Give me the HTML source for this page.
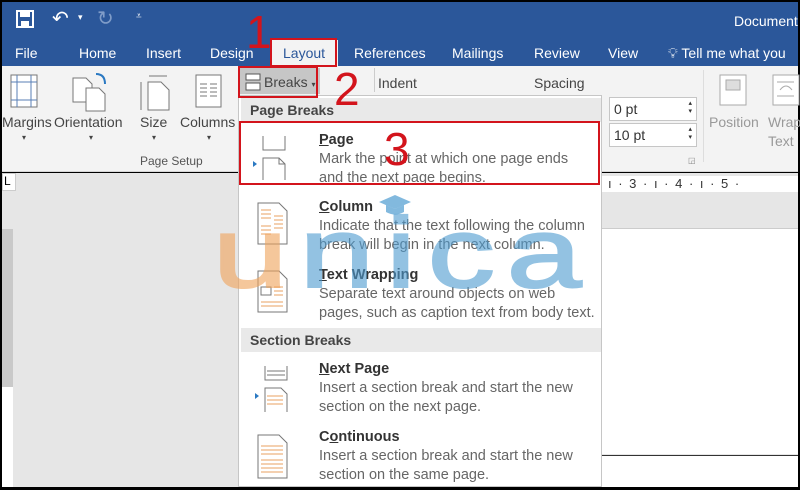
<!DOCTYPE html>
<html><head><meta charset="utf-8"><style>
*{margin:0;padding:0;box-sizing:border-box}
body{width:800px;height:490px;overflow:hidden;background:#000;font-family:"Liberation Sans",sans-serif;position:relative}
.a{position:absolute}
.title{left:2px;top:2px;width:796px;height:64px;background:#2b579a}
.tab{position:absolute;top:43px;color:#fff;font-size:14px}
.ribbon{left:2px;top:66px;width:796px;height:106px;background:#f3f3f3;border-bottom:1px solid #d6d6d6}
.lbl{position:absolute;font-size:14px;color:#444}
.doc{left:2px;top:173px;width:796px;height:314px;background:#e6e6e6}
.menu{left:238px;top:95px;width:364px;height:392px;background:#fff;border:1px solid #c6c6c6}
.hdr{position:absolute;left:2px;width:360px;height:24px;background:#e9e9e9;font-size:14px;font-weight:bold;color:#444;padding:4px 0 0 9px}
.it{position:absolute;left:80px;font-size:14.5px;color:#666;line-height:19px;white-space:nowrap}
.it b{color:#333;font-size:14.5px;display:block;line-height:20px}
.it b u{text-decoration:underline}
.red{position:absolute;color:#d3141c;font-size:46px;font-family:"Liberation Sans",sans-serif}
.box{position:absolute;border:2px solid #d3141c}
.inp{position:absolute;background:#fff;border:1px solid #c6c6c6;font-size:14px;color:#333;padding:3px 4px}
</style></head><body>
<div class="a title">
  <svg class="a" style="left:14px;top:8px" width="18" height="18"><rect x="1" y="1" width="16" height="16" fill="none" stroke="#fff" stroke-width="2"/><rect x="4" y="1" width="10" height="6" fill="#fff"/><rect x="5" y="11" width="8" height="6" fill="#fff"/></svg>
  <div class="a" style="left:50px;top:4px;color:#fff;font-size:20px">↶</div>
  <div class="a" style="left:76px;top:10px;color:#fff;font-size:9px">▾</div>
  <div class="a" style="left:95px;top:4px;color:#7f9cc8;font-size:20px">↻</div>
  <div class="a" style="left:134px;top:9px;color:#fff;font-size:10px">⩡</div>
  <div class="a" style="left:732px;top:11px;color:#fff;font-size:14px">Document</div>
  <div class="tab" style="left:13px">File</div>
  <div class="tab" style="left:77px">Home</div>
  <div class="tab" style="left:144px">Insert</div>
  <div class="tab" style="left:208px">Design</div>
  <div class="a" style="left:270px;top:38px;width:66px;height:28px;background:#f3f3f3"></div>
  <div class="tab" style="left:281px;color:#2b579a">Layout</div>
  <div class="tab" style="left:352px">References</div>
  <div class="tab" style="left:450px">Mailings</div>
  <div class="tab" style="left:532px">Review</div>
  <div class="tab" style="left:606px">View</div>
  <div class="tab" style="left:666px">💡︎ Tell me what you</div>
</div>
<div class="a ribbon">
  <svg class="a" style="left:8px;top:8px" width="30" height="34"><rect x="1" y="1" width="26" height="32" fill="#fff" stroke="#777"/><path d="M7 1V33M21 1V33M1 8H27M1 26H27" stroke="#5a7fb5"/></svg>
  <svg class="a" style="left:70px;top:6px" width="40" height="40"><path d="M1 6H14L20 12V30H1Z" fill="#fff" stroke="#777"/><path d="M14 16H27L33 22V39H14Z" fill="#fff" stroke="#777"/><path d="M24 2Q33 2 33 12" stroke="#2b79c2" stroke-width="2" fill="none"/></svg>
  <svg class="a" style="left:137px;top:6px" width="34" height="40"><path d="M10 4H28M2 10V38" stroke="#777"/><path d="M9 10H22L30 18V38H9Z" fill="#fff" stroke="#777"/></svg>
  <svg class="a" style="left:193px;top:8px" width="28" height="34"><rect x="1" y="1" width="25" height="32" fill="#fff" stroke="#777"/><path d="M5 10H12M15 10H22M5 14H12M15 14H22M5 18H12M15 18H22M5 22H12M15 22H22" stroke="#777"/></svg>
  <div class="lbl" style="left:0px;top:48px">Margins</div>
  <div class="lbl" style="left:52px;top:48px">Orientation</div>
  <div class="lbl" style="left:138px;top:48px">Size</div>
  <div class="lbl" style="left:178px;top:48px">Columns</div>
  <div class="lbl" style="left:20px;top:67px;font-size:8px">▾</div>
  <div class="lbl" style="left:87px;top:67px;font-size:8px">▾</div>
  <div class="lbl" style="left:150px;top:67px;font-size:8px">▾</div>
  <div class="lbl" style="left:205px;top:67px;font-size:8px">▾</div>
  <div class="lbl" style="left:138px;top:88px;font-size:12px;color:#555">Page Setup</div>
  <div class="a" style="left:238px;top:2px;width:80px;height:26px;background:#c6c6c6"></div>
  <svg class="a" style="left:242px;top:7px" width="18" height="18"><rect x="2" y="1" width="14" height="6" fill="#fff" stroke="#555"/><rect x="2" y="10" width="14" height="7" fill="#fff" stroke="#555"/></svg>
  <div class="lbl" style="left:262px;top:8px">Breaks <span style="font-size:8px">▾</span></div>
  <div class="a" style="left:372px;top:2px;width:1px;height:24px;background:#ccc"></div>
  <div class="lbl" style="left:376px;top:9px">Indent</div>
  <div class="lbl" style="left:532px;top:9px">Spacing</div>
  <div class="inp" style="left:607px;top:31px;width:88px;height:24px">0 pt<span style="position:absolute;right:4px;top:2px;font-size:7px;line-height:8px">▴<br>▾</span></div>
  <div class="inp" style="left:607px;top:57px;width:88px;height:24px">10 pt<span style="position:absolute;right:4px;top:2px;font-size:7px;line-height:8px">▴<br>▾</span></div>
  <div class="lbl" style="left:686px;top:90px;font-size:8px;color:#888">◲</div>
  <div class="a" style="left:701px;top:4px;width:1px;height:92px;background:#ddd"></div>
  <svg class="a" style="left:717px;top:8px" width="30" height="34"><rect x="1" y="1" width="26" height="30" fill="#fff" stroke="#aaa"/><rect x="7" y="6" width="14" height="10" fill="#ddd" stroke="#aaa"/></svg>
  <svg class="a" style="left:770px;top:8px" width="30" height="34"><rect x="1" y="1" width="26" height="30" fill="#fff" stroke="#aaa"/><path d="M5 8H22M5 22H22M8 16Q14 8 20 16" stroke="#aaa" fill="none"/></svg>
  <div class="lbl" style="left:707px;top:48px;color:#999">Position</div>
  <div class="lbl" style="left:766px;top:48px;color:#999">Wrap</div>
  <div class="lbl" style="left:766px;top:67px;color:#999">Text</div>
</div>
<div class="a doc">
  <div class="a" style="left:0;top:0;width:14px;height:18px;background:#fff;border:1px solid #ccc;font-size:12px;padding-left:1px">L</div>
  <div class="a" style="left:0;top:56px;width:11px;height:158px;background:#c9c9c9"></div>
  <div class="a" style="left:0;top:214px;width:11px;height:100px;background:#fff"></div>
  <div class="a" style="left:600px;top:3px;width:196px;height:16px;background:#fff;font-size:13px;color:#333;letter-spacing:1.5px;padding-left:6px;white-space:pre">ı · 3 · ı · 4 · ı · 5 ·</div>
  <div class="a" style="left:600px;top:55px;width:196px;height:226px;background:#fff;border-top:1px solid #ccc"></div>
  <div class="a" style="left:600px;top:282px;width:196px;height:1px;background:#333"></div>
  <div class="a" style="left:600px;top:283px;width:196px;height:31px;background:#fff"></div>
</div>
<div class="a menu">
  <div class="hdr" style="top:2px">Page Breaks</div>
  <svg class="a" style="left:12px;top:40px" width="40" height="44"><path d="M12 0V14H34V0" fill="none" stroke="#777"/><path d="M12 44V22H28L34 28V44" fill="#fff" stroke="#777"/><path d="M28 22V28H34" fill="none" stroke="#777"/><path d="M2 25L6 28L2 31Z" fill="#2b79c2"/></svg>
  <div class="it" style="top:34px"><b><u>P</u>age</b>Mark the point at which one page ends<br>and the next page begins.</div>
  <svg class="a" style="left:18px;top:106px" width="32" height="44"><path d="M1 1H22L30 9V42H1Z" fill="#fff" stroke="#777"/><path d="M4 8H14M4 12H14M4 16H14M17 14H26M17 18H26M17 22H26M17 26H26M4 24H14M4 28H14M4 32H14" stroke="#e9a060"/></svg>
  <div class="it" style="top:101px"><b><u>C</u>olumn</b>Indicate that the text following the column<br>break will begin in the next column.</div>
  <svg class="a" style="left:18px;top:174px" width="32" height="44"><path d="M1 1H22L30 9V42H1Z" fill="#fff" stroke="#777"/><rect x="4" y="17" width="10" height="8" fill="none" stroke="#777"/><path d="M17 17H26M17 21H26M17 25H26M4 32H26M4 36H26" stroke="#e9a060"/></svg>
  <div class="it" style="top:169px"><b><u>T</u>ext Wrapping</b>Separate text around objects on web<br>pages, such as caption text from body text.</div>
  <div class="hdr" style="top:232px">Section Breaks</div>
  <svg class="a" style="left:14px;top:270px" width="40" height="46"><path d="M12 0V14H34V0" fill="none" stroke="#777"/><path d="M14 5H32M14 9H32" stroke="#777"/><path d="M12 46V22H28L34 28V46" fill="#fff" stroke="#777"/><path d="M14 30H30M14 34H30M14 38H30" stroke="#e9a060"/><path d="M2 27L6 30L2 33Z" fill="#2b79c2"/></svg>
  <div class="it" style="top:263px"><b><u>N</u>ext Page</b>Insert a section break and start the new<br>section on the next page.</div>
  <svg class="a" style="left:18px;top:338px" width="32" height="46"><path d="M1 1H22L30 9V44H1Z" fill="#fff" stroke="#777"/><path d="M4 12H26M4 16H26M4 20H26M4 26H26M4 30H26M4 34H26M4 38H26" stroke="#e9a060"/></svg>
  <div class="it" style="top:331px"><b>C<u>o</u>ntinuous</b>Insert a section break and start the new<br>section on the same page.</div>
</div>
<div class="a" style="left:213px;top:204px;font-size:134px;line-height:134px;letter-spacing:12px;white-space:nowrap;opacity:.6;-webkit-text-stroke:3px;transform:scaleY(0.74);transform-origin:0 0"><span style="color:#f0a25a;-webkit-text-stroke-color:#f0a25a">u</span><span style="color:#4d9bd0;-webkit-text-stroke-color:#4d9bd0">nica</span></div>
<svg class="a" style="left:377px;top:194px" width="36" height="26"><path d="M2 8L18 1L34 8L18 15Z" fill="#4d9bd0" opacity=".7"/><path d="M9 11V18Q18 23 27 18V11L18 15Z" fill="#4d9bd0" opacity=".7"/></svg>
<div class="box" style="left:270px;top:38px;width:67px;height:29px"></div>
<div class="box" style="left:238px;top:66px;width:80px;height:32px"></div>
<div class="box" style="left:239px;top:121px;width:361px;height:64px"></div>
<div class="red" style="left:246px;top:5px">1</div>
<div class="red" style="left:334px;top:62px">2</div>
<div class="red" style="left:384px;top:122px">3</div>
</body></html>
